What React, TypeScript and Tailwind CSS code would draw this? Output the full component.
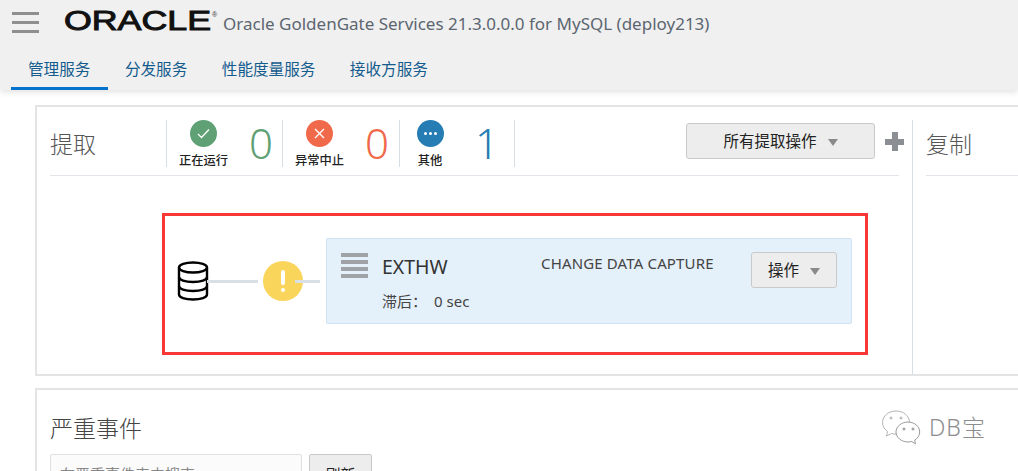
const cjk = "font-['Noto_Sans','Noto_Sans_CJK_SC',sans-serif]";

const tabs = ["管理服务", "分发服务", "性能度量服务", "接收方服务"];

function Bars({ className, bar }: { className: string; bar: string }) {
  return (
    <div className={`flex flex-col ${className}`}>
      <div className={bar} />
      <div className={bar} />
      <div className={bar} />
      <div className={bar} />
    </div>
  );
}

function Caret() {
  return <span className="ml-[11px] h-0 w-0 border-x-[5px] border-t-[7px] border-x-transparent border-t-[#8a8a8a]" />;
}

function Stat({
  label,
  count,
  color,
  numberColor,
  width,
  colWidth,
  numWidth,
  children,
}: {
  label: string;
  count: string;
  color: string;
  numberColor: string;
  width: string;
  colWidth: string;
  numWidth: string;
  children: React.ReactNode;
}) {
  return (
    <div className={`flex h-[47px] shrink-0 items-start border-l border-[#d6dde3] ${width}`}>
      <div className={`flex flex-col items-center ${colWidth}`}>
        <div className={`flex h-[27px] w-[27px] items-center justify-center rounded-full ${color}`}>{children}</div>
        <div className="mt-[6px] text-[12.25px] leading-[16px] font-medium whitespace-nowrap text-[#222]">{label}</div>
      </div>
      <div className={`text-center text-[42px] leading-[46px] font-light ${numWidth} ${numberColor}`}>{count}</div>
    </div>
  );
}

function DbIcon() {
  return (
    <svg width="32" height="41" viewBox="0 0 32 41" fill="none" stroke="#000" strokeWidth="2.4" className="shrink-0">
      <ellipse cx="16" cy="6.500" rx="14" ry="5" />
      <path d="M2 6.500v27c0 3 6 5 14 5s14-2 14-5v-27" />
      <path d="M2 16c0 3 6 5 14 5s14-2 14-5" />
      <path d="M2 25c0 3 6 5 14 5s14-2 14-5" />
    </svg>
  );
}

function Watermark() {
  return (
    <div className="absolute top-[409px] left-[881px] flex items-center text-[#8c8c8c]">
      <svg width="42" height="36" viewBox="0 0 42 36" fill="#fff" stroke="#b5b5b5" strokeWidth="1">
        <path d="M15 2C7.500 2 1.500 7 1.500 13.500c0 3.800 2 6.800 5 9l-1 4.500 5-2.500c1.500.4 3 .7 4.500.7 7.500 0 13.500-5 13.500-11.700S22.500 2 15 2z" />
        <path d="M27 13c-6.500 0-12 4.500-12 10s5.500 10 12 10c1.300 0 2.500-.2 3.700-.5l3.800 2.300-.8-3.700c3-2 5-4.800 5-8.100 0-5.500-5.200-10-11.700-10z" stroke="#999" />
        <circle cx="10" cy="9" r="1" stroke="#aaa" />
        <circle cx="20" cy="9" r="1" stroke="#aaa" />
        <circle cx="23" cy="20" r="1" stroke="#888" />
        <circle cx="32" cy="20" r="1" stroke="#888" />
      </svg>
      <span className="ml-[6px] text-[23px] leading-[30px] font-light tracking-[1px]">DB宝</span>
    </div>
  );
}

export default function App() {
  return (
    <div className={`relative h-[471px] w-[1018px] overflow-hidden bg-white ${cjk}`}>
      <header className="relative h-[90px] bg-[#f0f0f0] shadow-[0_2px_6px_rgba(0,0,0,0.12)]">
        <div className="flex h-[46px] items-center">
          <div className="mb-[1px] ml-[12px] flex w-[27px] flex-col gap-[6px]">
            <div className="h-[3px] bg-[#8f8f8f]" />
            <div className="h-[3px] bg-[#8f8f8f]" />
            <div className="h-[3px] bg-[#8f8f8f]" />
          </div>
          <svg width="155" height="30" viewBox="0 0 155 30" className="mb-[2px] ml-[25px] overflow-visible">
            <text
              x="0"
              y="23"
              textLength="147"
              lengthAdjust="spacingAndGlyphs"
              fontFamily="Liberation Sans"
              fontWeight="400"
              fontSize="27"
              fill="#111"
              stroke="#111"
              strokeWidth="1"
            >
              ORACLE
            </text>
            <text x="148" y="10" fontFamily="Liberation Sans" fontSize="7" fill="#333">
              ®
            </text>
          </svg>
          <span className="mt-[2px] ml-[4px] text-[17px] leading-[24px] text-[#5c6670]">
            Oracle GoldenGate Services 21.3.0.0.0 for MySQL (deploy213)
          </span>
        </div>
        <nav className="ml-[10.75px] flex h-[44px]">
          {tabs.map((t, i) => (
            <div
              key={t}
              className={`flex h-full items-start px-[17.25px] pt-[12px] text-[15.6px] leading-[22px] text-[#145c8e] ${
                i === 0 ? "border-b-[3px] border-[#0572ce]" : ""
              }`}
            >
              {t}
            </div>
          ))}
        </nav>
      </header>

      <main className="pt-[15px] pl-[35px]">
        <section className="flex h-[271px] w-[1100px] border-2 border-r-0 border-[#e4e4e4] pt-[13px] pl-[13px]">
          <div className="w-[849px] shrink-0">
            <div className="flex h-[56px] border-b border-[#e2e6ea]">
              <h2 className="w-[116px] shrink-0 pt-[8px] text-[23px] leading-[32px] font-light text-[#555]">提取</h2>
              <Stat
                label="正在运行"
                count="0"
                color="bg-[#5fa075]"
                numberColor="text-[#5fa075]"
                width="w-[116px]"
                colWidth="w-[73px]"
                numWidth="w-[42px]"
              >
                <svg width="15" height="15" viewBox="0 0 15 15" fill="none" stroke="#fff" strokeWidth="1.3">
                  <path d="M2 8l3.500 3.500L13 3.500" />
                </svg>
              </Stat>
              <Stat
                label="异常中止"
                count="0"
                color="bg-[#ef694a]"
                numberColor="text-[#ef694a]"
                width="w-[117px]"
                colWidth="w-[73px]"
                numWidth="w-[42px]"
              >
                <svg width="13" height="13" viewBox="0 0 13 13" fill="none" stroke="#fff" strokeWidth="1.4">
                  <path d="M2 2l9 9M11 2l-9 9" />
                </svg>
              </Stat>
              <Stat
                label="其他"
                count="1"
                color="bg-[#267db3]"
                numberColor="text-[#267db3]"
                width="w-[115px]"
                colWidth="w-[60px]"
                numWidth="w-[54px]"
              >
                <div className="flex gap-[2px]">
                  <span className="h-[3px] w-[3px] rounded-full bg-white" />
                  <span className="h-[3px] w-[3px] rounded-full bg-white" />
                  <span className="h-[3px] w-[3px] rounded-full bg-white" />
                </div>
              </Stat>
              <div className="h-[47px] shrink-0 border-l border-[#d6dde3]" />
              <button className="mt-[3px] ml-[171px] flex h-[36px] w-[189px] shrink-0 items-center justify-center rounded-[3px] border border-[#c9c9c9] bg-[#ededed] pt-[2px] text-[15.5px] text-[#222]">
                所有提取操作
                <Caret />
              </button>
              <div className="relative mt-[12px] ml-[10px] h-[19px] w-[19px] shrink-0">
                <div className="absolute top-[6.5px] left-0 h-[6px] w-[19px] bg-[#8b8f93]" />
                <div className="absolute top-0 left-[6.5px] h-[19px] w-[6px] bg-[#8b8f93]" />
              </div>
            </div>

            <div className="mt-[37px] ml-[112px] flex h-[142px] w-[706px] border-[3px] border-[#f83737] pt-[22px] pl-[12px]">
              <div className="relative flex h-[86px] items-center">
                <DbIcon />
                <div className="mt-[1px] -ml-[2px] h-[3px] w-[51px] shrink-0 bg-[#d8e0e6]" />
                <div className="relative ml-[5px] flex h-[40px] w-[40px] shrink-0 flex-col items-center justify-center rounded-full bg-[#f9d55c]">
                  <div className="h-[15px] w-[4px] rounded-[2px] bg-white" />
                  <div className="mt-[3px] h-[4px] w-[4px] rounded-full bg-white" />
                </div>
                <div className="z-10 -ml-[8px] h-[3px] w-[25px] shrink-0 bg-[#d8e0e6]" />
                <div className="ml-[6px] flex h-[86px] w-[526px] shrink-0 rounded-[2px] border border-[#cfe3f5] bg-[#e4f0fa]">
                  <Bars className="mt-[14px] ml-[14px] w-[27px] shrink-0 gap-[3px]" bar="h-[4px] bg-[#9fa3a8]" />
                  <div className="ml-[14px] w-[159px] shrink-0">
                    <div className="mt-[15px] text-[19.5px] leading-[26px] text-[#333]">EXTHW</div>
                    <div className="mt-[11px] text-[15px] leading-[20px] whitespace-nowrap text-[#444]">
                      滞后：<span className="ml-[7px]">0 sec</span>
                    </div>
                  </div>
                  <div className="mt-[14px] w-[210px] shrink-0 text-[15px] leading-[20px] tracking-[0.15px] whitespace-nowrap text-[#444]">
                    CHANGE DATA CAPTURE
                  </div>
                  <button className="mt-[13px] flex h-[36px] w-[86px] shrink-0 items-center justify-center rounded-[3px] border border-[#c9c9c9] bg-[#ededed] pt-[2px] text-[15.5px] text-[#222]">
                    操作
                    <Caret />
                  </button>
                </div>
              </div>
            </div>
          </div>
          <div className="ml-[13px] border-l border-[#d6dde3] pl-[13px]">
            <div className="flex h-[56px] w-[200px] border-b border-[#e2e6ea] pt-[8px] text-[23px] leading-[32px] font-light text-[#555]">
              复制
            </div>
          </div>
        </section>

        <section className="mt-[12px] h-[200px] w-[1100px] border-2 border-r-0 border-[#e4e4e4] pt-[22px] pl-[13px]">
          <h2 className="text-[23px] leading-[32px] font-light text-[#444]">严重事件</h2>
          <div className="mt-[10px] flex gap-[7px]">
            <div className="h-[40px] w-[252px] rounded-[2px] border border-[#e0e0e0] bg-[#fbfbfb] pt-[8px] pl-[9px] text-[15px] leading-[22px] text-[#888]">
              在严重事件表中搜索
            </div>
            <button className="h-[40px] w-[63px] rounded-[2px] border border-[#c9c9c9] bg-[#ededed] text-[15px] text-[#222]">
              刷新
            </button>
          </div>
        </section>
      </main>

      <Watermark />
    </div>
  );
}
